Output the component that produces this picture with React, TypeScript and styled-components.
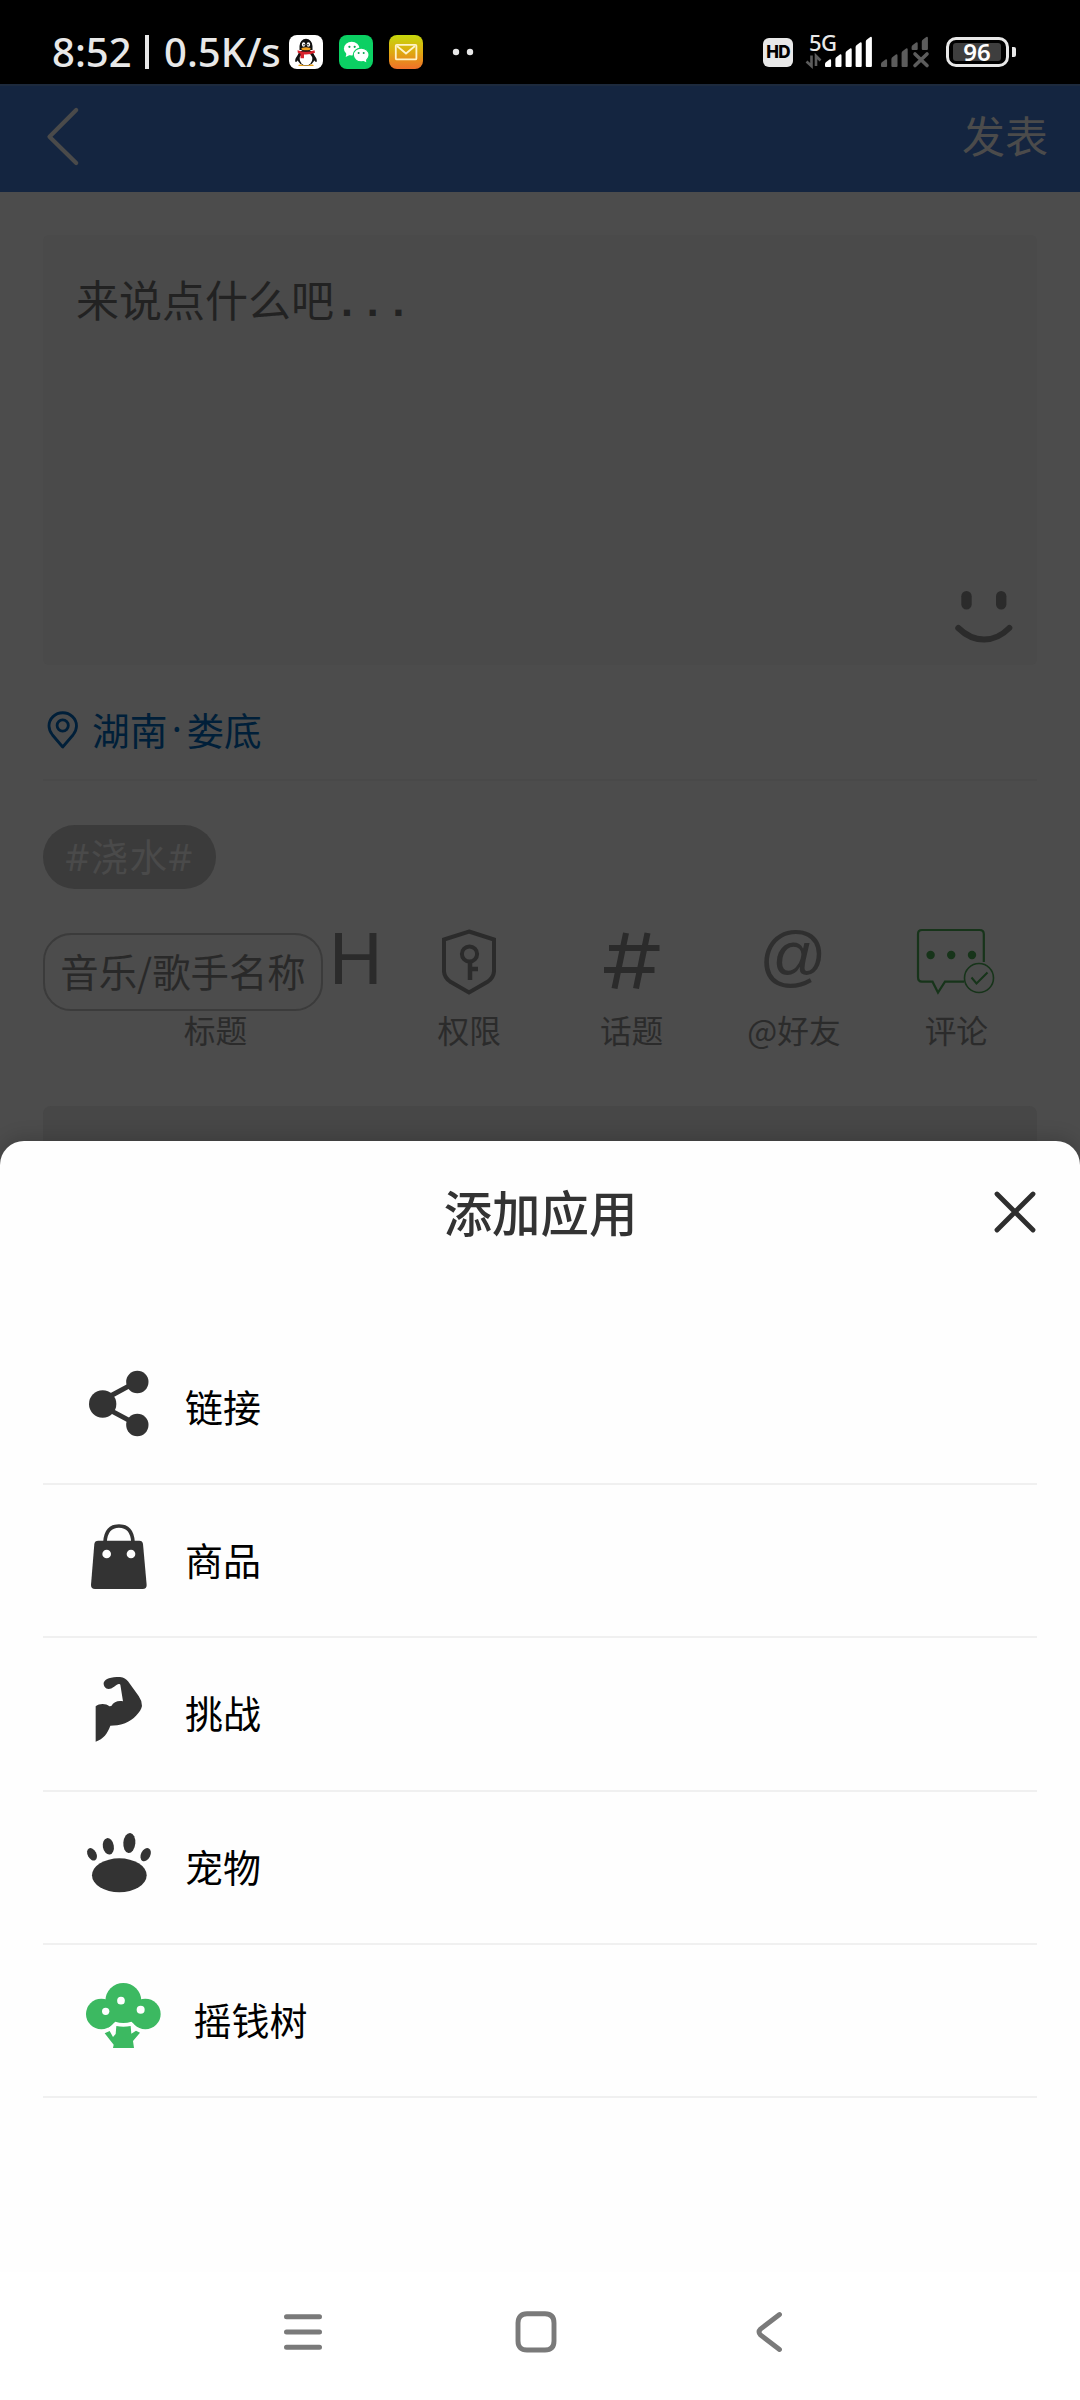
import React from "react";
import styled, { createGlobalStyle } from "styled-components";

const GlobalStyle = createGlobalStyle`
  * { box-sizing: border-box; }
  html, body { margin: 0; padding: 0; background: #4c4c4c; }
  body { font-family: "Noto Sans", "Noto Sans CJK SC", sans-serif; }
  svg { display: block; flex: none; overflow: visible; }
`;

const Screen = styled.div`
  width: 1080px;
  height: 2400px;
  display: flex;
  flex-direction: column;
  overflow: hidden;
  background: #4c4c4c;
`;

/* ---------- status bar ---------- */
const StatusBar = styled.header`
  height: 84px;
  flex: none;
  background: #000;
  display: flex;
  align-items: center;
  padding: 20px 64px 0 52px;
  color: #e8e8e8;
`;
const ClockText = styled.div`
  display: flex;
  align-items: center;
  width: 237px;
  font-size: 40px;
  font-weight: 500;
  line-height: 40px;
  white-space: nowrap;
`;
const ClockBar = styled.i`
  width: 4.5px;
  height: 34px;
  margin: 0 15px 0 13px;
  background: #e8e8e8;
`;
const AppIcons = styled.div`
  display: flex;
  gap: 16px;
  align-items: center;
`;
const StatusRight = styled.div`
  display: flex;
  align-items: center;
  margin-left: auto;
`;
const HdBadge = styled.div`
  width: 30px;
  height: 29px;
  border-radius: 6px;
  background: #e8e8e8;
  color: #000;
  font: 800 17px/29px Inter, sans-serif;
  letter-spacing: -0.8px;
  text-align: center;
`;
const Network = styled.div`
  display: flex;
  position: relative;
  margin-left: 12px;
`;
const NetworkLabel = styled.span`
  position: absolute;
  left: 4px;
  top: -4px;
  font-size: 22px;
  font-weight: 500;
  line-height: 20px;
  letter-spacing: -0.5px;
`;
const Battery = styled.div`
  width: 63px;
  height: 30px;
  margin-left: 16px;
  padding: 3px 5px 3px 4px;
  border: 3px solid #e8e8e8;
  border-radius: 10px;
`;
const BatteryLevel = styled.div`
  width: 48px;
  height: 18px;
  border-radius: 3px;
  background: #3e3e3e;
  color: #fff;
  font: 600 24px/18px "Noto Sans", sans-serif;
  text-align: center;
`;
const BatteryNub = styled.i`
  width: 4px;
  height: 10px;
  margin-left: 3px;
  border-radius: 0 2px 2px 0;
  background: #e8e8e8;
`;

/* ---------- dimmed composer ---------- */
const TitleBar = styled.nav`
  height: 108px;
  flex: none;
  display: flex;
  align-items: center;
  justify-content: space-between;
  padding: 0 32px 4px 46px;
  background: #142540;
  border-top: 2px solid #1d2a3d;
`;
const PublishText = styled.span`
  padding-bottom: 7px;
  color: #4b4b4b;
  font: 400 43px/60px "Noto Sans CJK SC", sans-serif;
`;
const Composer = styled.main`
  height: 949px;
  flex: none;
  padding: 43px 43px 0;
  display: flex;
  flex-direction: column;
  color: #292929;
  overflow: hidden;
`;
const TextBox = styled.section`
  height: 430px;
  flex: none;
  display: flex;
  flex-direction: column;
  justify-content: space-between;
  padding: 31px 25px 22px 33px;
  border-radius: 6px;
  background: #4a4a4a;
`;
const Placeholder = styled.p`
  margin: 0;
  display: flex;
  color: #222;
  font: 400 43px/64px "Noto Sans CJK SC", sans-serif;
`;
const Ellipsis = styled.span`
  padding-top: 7px;
  font-family: "Liberation Mono", monospace;
  font-weight: 700;
`;
const SmileHolder = styled.div`
  align-self: flex-end;
`;
const Location = styled.div`
  height: 116px;
  flex: none;
  display: flex;
  align-items: center;
  padding: 16px 0 0 4px;
  gap: 13px;
  border-bottom: 2px solid #494949;
  color: #001f39;
  font: 400 37.7px/54px "Noto Sans CJK SC", sans-serif;
`;
const Dot = styled.span`
  width: 19px;
  text-align: center;
  font-family: "Noto Sans", sans-serif;
`;
const LocationName = styled.span`
  display: flex;
  padding-bottom: 3px;
`;
const Tag = styled.div`
  width: 173px;
  height: 64px;
  flex: none;
  margin-top: 44px;
  border-radius: 32px;
  background: #3b3b3b;
  color: #4a4a4a;
  font: 400 37.5px/63px "Noto Sans", "Noto Sans CJK SC", sans-serif;
  letter-spacing: 1.3px;
  text-align: center;
`;
const Tools = styled.div`
  display: flex;
  height: 173px;
  margin-top: 44px;
  flex: none;
`;
const Tool = styled.div<{ $wide?: boolean }>`
  width: ${(p) => (p.$wide ? 345 : 162.4)}px;
  flex: none;
  display: flex;
  flex-direction: column;
  align-items: ${(p) => (p.$wide ? "stretch" : "center")};
`;
const ToolTop = styled.div<{ $lift?: number }>`
  height: 76px;
  flex: none;
  display: flex;
  justify-content: flex-start;
  align-items: flex-start;

  & > svg {
    margin-top: -${(p) => p.$lift ?? 0}px;
  }
`;
const ToolLabel = styled.span`
  color: #2b2b2b;
  font: 400 31.7px/40px "Noto Sans CJK SC", sans-serif;
  text-align: center;
`;
const MusicInput = styled.div`
  width: 280px;
  height: 78px;
  flex: none;
  border: 2px solid #3b3b3b;
  border-radius: 28px;
  font: 400 38.4px/71px "Noto Sans CJK SC", sans-serif;
  text-align: center;
  white-space: nowrap;
`;
const HeadingLetter = styled.span`
  margin-left: 6px;
  color: #2b2b2b;
  font: 400 74px/52px "Liberation Sans", sans-serif;
`;
const AtSign = styled.span`
  margin-left: -2px;
  color: #2f2f2f;
  font: 400 67px/43px "Liberation Sans", sans-serif;
`;
const NextCard = styled.div`
  flex: 1;
  border-radius: 8px 8px 0 0;
  background: #474747;
`;

/* ---------- bottom sheet ---------- */
const Sheet = styled.section`
  flex: 1;
  display: flex;
  flex-direction: column;
  border-radius: 24px 24px 0 0;
  background: #fefefe;
  box-shadow: 0 -4px 18px rgba(0, 0, 0, 0.16);
  z-index: 1;
`;
const SheetHead = styled.div`
  height: 191px;
  display: grid;
  grid-template-columns: 1fr auto 1fr;
  align-items: start;
  padding: 34px 44px 0 45px;
`;
const SheetTitle = styled.h1`
  grid-column: 2;
  margin: 0;
  color: #333;
  font: 500 48.4px/72px "Noto Sans CJK SC", sans-serif;
`;
const CloseHolder = styled.div`
  justify-self: end;
  padding-top: 16px;
`;
const List = styled.ul`
  margin: 0 43px;
  padding: 0;
  list-style: none;
`;
const Item = styled.li`
  height: 153.2px;
  display: flex;
  align-items: center;
  gap: 35px;
  padding-left: 43px;
  border-bottom: 2px solid #f0f0f0;
`;
const ItemIcon = styled.div`
  width: 64px;
  margin-bottom: 9px;
`;
const ItemText = styled.span<{ $indent?: number }>`
  padding: 0 0 3px ${(p) => p.$indent ?? 0}px;
  color: #000;
  font: 400 38px/56px "Noto Sans CJK SC", sans-serif;
`;
const NavBar = styled.footer`
  height: 128px;
  flex: none;
  display: flex;
  align-items: center;
  justify-content: center;
  gap: 185px;
  padding: 0 8px 8px 0;
  background: #fff;
  position: relative;
  z-index: 2;
`;

const QQIcon = () => (
  <svg width="34" height="34" viewBox="0 0 34 34">
    <rect width="34" height="34" rx="8" fill="#fff" />
    <path d="M9 20c-2 2-3.5 5-2.6 6.8.6.8 2-.5 2.6-1.7M25 20c2 2 3.500 5 2.600 6.800-.6.8-2-.5-2.600-1.700" fill="#111" />
    <path d="M11 29.500c-2 .3-2.500 1.200-.5 1.500h13c2-.3 1.500-1.200-.5-1.500z" fill="#e9a11b" />
    <ellipse cx="17" cy="22.500" rx="8.800" ry="8" fill="#111" />
    <path d="M10.500 15V11a6.500 7.200 0 0 1 13 0v4z" fill="#111" />
    <ellipse cx="17" cy="24" rx="6.300" ry="6.300" fill="#fff" />
    <ellipse cx="14.600" cy="9.500" rx="1.700" ry="2.300" fill="#fff" />
    <ellipse cx="19.400" cy="9.500" rx="1.700" ry="2.300" fill="#fff" />
    <circle cx="15" cy="9.800" r=".8" fill="#111" />
    <circle cx="19" cy="9.800" r=".8" fill="#111" />
    <ellipse cx="17" cy="13.700" rx="4.600" ry="1.500" fill="#f4a11c" />
    <path d="M8.500 15.300q8.500 3 17 0l.5 2.500q-4 1.500-9 1.600l-2 .1v3.800h-3.500v-4.500l-2.700-1z" fill="#d8222c" />
  </svg>
);
const WeChatIcon = () => (
  <svg width="34" height="34" viewBox="0 0 34 34">
    <rect width="34" height="34" rx="8" fill="#0bd063" />
    <ellipse cx="12.700" cy="13.700" rx="7.800" ry="6.900" fill="#fff" />
    <path d="M7.500 18l-.8 4 4-2z" fill="#fff" />
    <ellipse cx="22.200" cy="20" rx="7.900" ry="6.900" fill="#fff" stroke="#0bd063" strokeWidth="1.200" />
    <path d="M23.500 25.500l3.800 1.800-.6-3.500z" fill="#fff" />
    <circle cx="10.400" cy="11.800" r="1.100" fill="#0aa651" />
    <circle cx="15.700" cy="11.800" r="1.100" fill="#0aa651" />
    <circle cx="19.600" cy="18" r="1" fill="#0aa651" />
    <circle cx="24.700" cy="18" r="1" fill="#0aa651" />
  </svg>
);
const MailIcon = () => (
  <svg width="34" height="34" viewBox="0 0 34 34">
    <defs>
      <linearGradient id="mail" x1="0" y1="0" x2="0" y2="1">
        <stop offset="0" stopColor="#c6d80c" />
        <stop offset=".5" stopColor="#deaa10" />
        <stop offset="1" stopColor="#f0702a" />
      </linearGradient>
    </defs>
    <rect width="34" height="34" rx="8" fill="url(#mail)" />
    <rect x="6.800" y="9.800" width="20.600" height="14.600" rx="1" fill="none" stroke="#fff3c8" strokeWidth="1.800" />
    <path d="M8 11l9 7.500 9-7.500" fill="none" stroke="#fff3c8" strokeWidth="1.800" />
  </svg>
);
const MoreDots = () => (
  <svg width="40" height="34" viewBox="0 0 40 34">
    <circle cx="17" cy="17" r="3.200" fill="#e8e8e8" />
    <circle cx="31" cy="17" r="3.200" fill="#e8e8e8" />
  </svg>
);

const bars = [
  { x: 0, top: 23 },
  { x: 10.4, top: 18 },
  { x: 20.6, top: 12 },
  { x: 30.6, top: 6 },
  { x: 40.8, top: 0.5 },
];
const barPath = (x: number, top: number, bottom: number) =>
  `M${x} ${top + 5}q0-1.500 1.500-2.300l3-2.300q1.500-.6 1.600 1V${bottom - 1}q0 1-1 1H${x + 1}q-1 0-1-1z`;

const Signal = () => (
  <svg width="67" height="32" viewBox="805 37 67 32">
    <g transform="translate(825 37)" fill="#fff">
      {bars.map((b) => (
        <path key={b.x} d={barPath(b.x, b.top, 31)} />
      ))}
    </g>
    <path d="M811.500 56.500v10.500l-5-4.500M816 67v-10l4.500 4.500" stroke="#5c5c5c" strokeWidth="2.600" fill="none" />
  </svg>
);
const SecondSim = styled.svg`
  margin-left: 9px;
`;
const SignalOff = () => (
  <SecondSim width="49" height="32" viewBox="881 37 49 32">
    <g transform="translate(881 37)" fill="#5c5c5c">
      {bars.map((b, i) => (
        <path key={b.x} d={barPath(b.x, b.top, i > 2 ? 14 : 31)} />
      ))}
    </g>
    <path d="M915 55l12 11.500M927 55l-12 11.500" stroke="#5c5c5c" strokeWidth="3.600" strokeLinecap="round" />
  </SecondSim>
);

const BackIcon = () => (
  <svg width="34" height="60" viewBox="46 107 34 60" fill="none" stroke="#4a4a4a" strokeWidth="4.200" strokeLinecap="round" strokeLinejoin="round">
    <path d="M76.200 110L49.500 136.700L76.200 163" />
  </svg>
);
const SmileIcon = () => (
  <svg width="58" height="52" viewBox="954 591 58 52">
    <rect x="961.300" y="591" width="10.400" height="18.500" rx="5.200" fill="#2b2b2b" />
    <rect x="996" y="591" width="10.400" height="18.500" rx="5.200" fill="#2b2b2b" />
    <path d="M958.300 628Q970 639.500 984 639.500T1009.300 628" fill="none" stroke="#2b2b2b" strokeWidth="6" strokeLinecap="round" />
  </svg>
);
const PinIcon = () => (
  <svg width="32" height="38" viewBox="47 711.500 32 38" fill="none" stroke="#001f39" strokeWidth="2.800">
    <path d="M62.700 747.500L52.500 735.500Q49 731 49 726.500A13.700 13.200 0 0 1 76.500 726.500Q76.500 731 73 735.500Z" strokeLinejoin="round" />
    <circle cx="62.700" cy="726" r="5.600" />
  </svg>
);
const ShieldIcon = () => (
  <svg width="56" height="66" viewBox="441 928.500 56 66" fill="none" stroke="#2b2b2b" strokeWidth="4">
    <path d="M469 931L494 939V971Q493.500 977 488 981L469 992L450 981Q444.500 977 444 971V939Z" />
    <circle cx="469.500" cy="953.500" r="7.600" />
    <path d="M470 961V979.500M471 968.500H478" strokeWidth="4.500" />
  </svg>
);
const HashIcon = () => (
  <svg width="56" height="58" viewBox="604 933 56 58" fill="none" stroke="#2b2b2b" strokeWidth="6">
    <path d="M626 934L614.500 989.500M647.500 934L636 989.500M609 949H659.500M604 971H654.500" />
  </svg>
);
const CommentIcon = () => (
  <svg width="78" height="66" viewBox="918 929 78 66" fill="none" stroke="#17341a" strokeWidth="2.200">
    <path d="M965 981.700H946L939 992.500L933.500 981.700H923Q919 981.700 919 977V934Q919 930 923 930H980.500Q984.800 930 984.800 934V962" />
    <circle cx="980" cy="978" r="14.500" strokeWidth="1.600" />
    <path d="M972.500 977.500L977.500 983.500L988.500 972.500" strokeWidth="2" />
    <g fill="#17341a" stroke="none">
      <circle cx="931.600" cy="955" r="4.200" />
      <circle cx="952.200" cy="955" r="4.200" />
      <circle cx="973" cy="955" r="4.200" />
    </g>
  </svg>
);
const CloseIcon = () => (
  <svg width="42" height="42" viewBox="0 0 42 42" stroke="#2e2e2e" strokeWidth="4.800" strokeLinecap="round">
    <path d="M3 3l36 36M39 3L3 39" />
  </svg>
);

const ShareIcon = () => (
  <svg width="64" height="65" viewBox="138 93 192 195" fill="#333">
    <path d="M200 174L280 131M200 205L280 248" stroke="#333" strokeWidth="15" />
    <circle cx="188" cy="192" r="41" />
    <circle cx="292" cy="126" r="33.500" />
    <circle cx="292" cy="255" r="33.500" />
  </svg>
);
const BagIcon = () => (
  <svg width="64" height="65" viewBox="138 552 192 195">
    <path d="M175 602H298Q308 602 309 612L320 735Q320 747 308 747H165Q153 747 153 735L163 612Q164 602 175 602Z" fill="#333" />
    <path d="M195 606Q198 558 237 558Q276 558 279 606" fill="none" stroke="#333" strokeWidth="11" />
    <circle cx="200" cy="642" r="13" fill="#fefefe" />
    <circle cx="273" cy="642" r="13" fill="#fefefe" />
  </svg>
);
const ArmIcon = () => (
  <svg width="64" height="65" viewBox="138 111 192 195" fill="#333">
    <path d="M167 305V199C178 190 198 190 208 199L214 198C221 185 235 181 249 184L241 134Q240 131 236 132C225 136 217 147 206 147C196 146 190 137 191 128C196 116 212 111 240 111C252 112 258 117 264 124L296 168Q306 182 306 198C303 215 280 240 255 250C238 256 225 257 211 257C203 280 190 297 167 305Z" />
  </svg>
);
const PawIcon = () => (
  <svg width="64" height="65" viewBox="138 569 192 195" fill="#333">
    <ellipse cx="238" cy="705" rx="82" ry="51" />
    <ellipse cx="156" cy="642" rx="13" ry="20" transform="rotate(-28 156 642)" />
    <ellipse cx="205" cy="618" rx="16.500" ry="25" transform="rotate(-10 205 618)" />
    <ellipse cx="268" cy="608" rx="18" ry="30" transform="rotate(5 268 608)" />
    <ellipse cx="317" cy="643" rx="14" ry="21" transform="rotate(27 317 643)" />
  </svg>
);
const TreeIcon = () => (
  <svg width="75" height="65" viewBox="138 132 225 195" fill="#3cb961">
    <circle cx="250" cy="186" r="54" />
    <circle cx="184" cy="225" r="46" />
    <circle cx="316" cy="225" r="46" />
    <path d="M200 190H300L300 266L274 248Q250 256 226 248L204 266Z" />
    <path d="M229 261Q250 265 272 261L274 284L288 275L300 281L279 306L282 327H219L221 317L194 283L209 276L219 294L227 285Z" />
    <circle cx="197" cy="217" r="11" fill="#fefefe" />
    <circle cx="243" cy="185" r="11.500" fill="#fefefe" />
    <circle cx="302" cy="212" r="12" fill="#fefefe" />
  </svg>
);

const MenuNav = () => (
  <svg width="48" height="48" viewBox="0 0 48 48" stroke="#7a7a7a" strokeWidth="5" strokeLinecap="round">
    <path d="M7.500 8.700h33M7.500 24h33M7.500 39.300h33" />
  </svg>
);
const HomeNav = () => (
  <svg width="48" height="48" viewBox="0 0 48 48" fill="none" stroke="#7a7a7a" strokeWidth="4.900">
    <path d="M15 5.800H33Q42 5.800 42 15V33Q42 42 33 42H15Q6 42 6 33V15Q6 5.800 15 5.800Z" />
  </svg>
);
const BackNav = () => (
  <svg width="48" height="48" viewBox="0 0 48 48" fill="none" stroke="#7a7a7a" strokeWidth="4.900" strokeLinecap="round">
    <path d="M34.500 6.500L15.500 21Q12.500 24 15.500 27L34.500 41.500" />
  </svg>
);

const items = [
  { label: "链接", Icon: ShareIcon, indent: 0 },
  { label: "商品", Icon: BagIcon, indent: 0 },
  { label: "挑战", Icon: ArmIcon, indent: 0 },
  { label: "宠物", Icon: PawIcon, indent: 0 },
  { label: "摇钱树", Icon: TreeIcon, indent: 8.5 },
];

const tools = [
  { label: "权限", icon: <ShieldIcon />, lift: 4 },
  { label: "话题", icon: <HashIcon />, lift: 1 },
  { label: "@好友", icon: <AtSign>@</AtSign>, lift: 0 },
  { label: "评论", icon: <CommentIcon />, lift: 4 },
];

export default function App() {
  return (
    <Screen>
      <GlobalStyle />
      <StatusBar>
        <ClockText>
          8:52
          <ClockBar />
          0.5K/s
        </ClockText>
        <AppIcons>
          <QQIcon />
          <WeChatIcon />
          <MailIcon />
          <MoreDots />
        </AppIcons>
        <StatusRight>
          <HdBadge>HD</HdBadge>
          <Network>
            <NetworkLabel>5G</NetworkLabel>
            <Signal />
            <SignalOff />
          </Network>
          <Battery>
            <BatteryLevel>96</BatteryLevel>
          </Battery>
          <BatteryNub />
        </StatusRight>
      </StatusBar>

      <TitleBar>
        <BackIcon />
        <PublishText>发表</PublishText>
      </TitleBar>

      <Composer>
        <TextBox>
          <Placeholder>
            来说点什么吧<Ellipsis>...</Ellipsis>
          </Placeholder>
          <SmileHolder>
            <SmileIcon />
          </SmileHolder>
        </TextBox>
        <Location>
          <PinIcon />
          <LocationName>
            湖南<Dot>·</Dot>娄底
          </LocationName>
        </Location>
        <Tag>#浇水#</Tag>
        <Tools>
          <Tool $wide>
            <ToolTop>
              <MusicInput>音乐/歌手名称</MusicInput>
              <HeadingLetter>H</HeadingLetter>
            </ToolTop>
            <ToolLabel>标题</ToolLabel>
          </Tool>
          {tools.map((t) => (
            <Tool key={t.label}>
              <ToolTop $lift={t.lift}>{t.icon}</ToolTop>
              <ToolLabel>{t.label}</ToolLabel>
            </Tool>
          ))}
        </Tools>
        <NextCard />
      </Composer>

      <Sheet>
        <SheetHead>
          <SheetTitle>添加应用</SheetTitle>
          <CloseHolder>
            <CloseIcon />
          </CloseHolder>
        </SheetHead>
        <List>
          {items.map(({ label, Icon, indent }) => (
            <Item key={label}>
              <ItemIcon>
                <Icon />
              </ItemIcon>
              <ItemText $indent={indent}>{label}</ItemText>
            </Item>
          ))}
        </List>
      </Sheet>
      <NavBar>
        <MenuNav />
        <HomeNav />
        <BackNav />
      </NavBar>
    </Screen>
  );
}
